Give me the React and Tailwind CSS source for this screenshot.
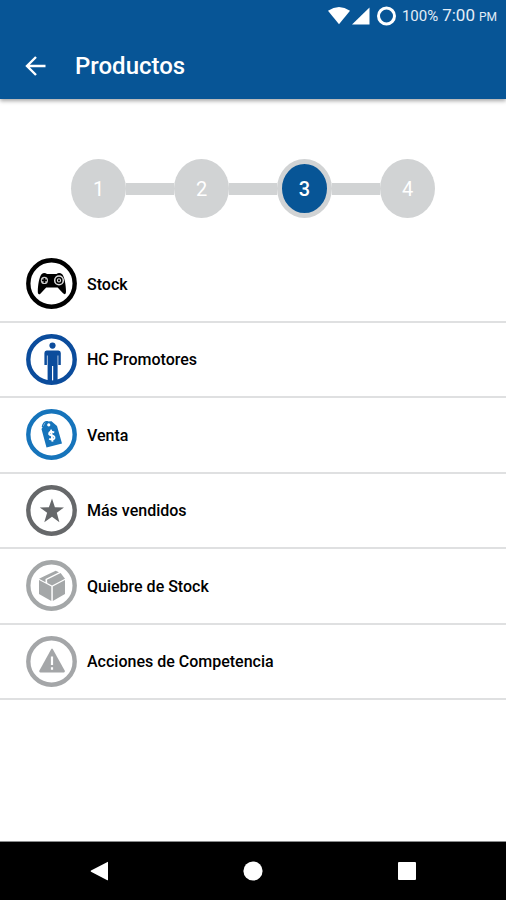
import React from "react";

function Ring({ children }) {
  return (
    <svg viewBox="0 0 51 51" className="size-[51px] shrink-0" fill="currentColor" aria-hidden="true">
      <circle cx="25.5" cy="25.5" r="23.2" fill="none" stroke="currentColor" strokeWidth="4.4" />
      {children}
    </svg>
  );
}

function GamepadIcon() {
  return (
    <Ring>
      <path d="M15.5 16.2Q18.3 14 21 16H30.5Q33.2 14 36.2 16.2C38.6 19 39.9 27 40 33.5C40 36.6 38.4 36.8 36.8 35L31.6 29.6H20.2L14.6 35.4C13 37 11.8 36.4 11.8 33.5C11.9 27 13.2 19 15.5 16.2Z" />
      <circle cx="18.4" cy="22.4" r="3.6" fill="#ccc" />
      <path d="M17.5 19.9h1.8v1.6h1.6v1.8h-1.6v1.6h-1.8v-1.6h-1.6v-1.8h1.6Z" />
      <circle cx="33" cy="22.4" r="4.3" fill="none" stroke="#ddd" strokeWidth="1.5" />
      <circle cx="33" cy="22.4" r="1.6" fill="none" stroke="#ddd" strokeWidth="1.1" />
    </Ring>
  );
}

function PersonIcon() {
  return (
    <Ring>
      <circle cx="26.5" cy="11.6" r="3.1" />
      <path d="M20.6 16.4H32.4Q34.8 16.6 34.8 19V31H32.3V21.5H31.6V49H27.2V32H26V49H21.6V21.5H20.9V31H18.4V19Q18.4 16.6 20.6 16.4Z" />
    </Ring>
  );
}

function TagIcon() {
  return (
    <Ring>
      <path fillRule="evenodd" d="M20 12.5L25.5 12.2L31 17L36 34.5L20.5 38.5L15.5 20Z M22.7 14.3a1.6 1.6 0 1 0 .1 0Z" />
      <path d="M16.3 18Q17.5 12 22 12.8" fill="none" stroke="currentColor" strokeWidth="1.3" />
      <path d="M28.2 23.5Q25 21.7 23.4 23.6C22.2 25.8 24.4 26.2 26 26.4C28.4 26.7 29.3 28.7 27.8 30Q26 31.3 23.2 29.7M25 20.6L26.5 32.7" fill="none" stroke="#fff" strokeWidth="1.9" />
    </Ring>
  );
}

function StarIcon() {
  return (
    <Ring>
      <path d="M26 13.6L28.9 22.2L38 22.4L30.8 27.8L33.4 37.2L26 31.7L18.3 37.2L21.1 27.8L13.8 22.4L22.9 22.2Z" />
    </Ring>
  );
}

function BoxIcon() {
  return (
    <Ring>
      <path d="M13 20L25.3 26.5V41L13 34Z" />
      <path d="M26.8 26.5L39 20V34L26.8 41Z" />
      <path d="M13 18.8L17.6 16.4L29.7 10.8L33 12.3L19.5 18.9V22.3Z" />
      <path d="M21 19.8L34.6 13.1L39 18.7L26 25.4L21.3 22.9Z" />
    </Ring>
  );
}

function WarningIcon() {
  return (
    <Ring>
      <path d="M25.3 13Q26 12 26.7 13L38.8 34.8Q39.2 36.4 37.8 36.5H14.3Q12.8 36.4 13.3 34.8Z" />
      <path d="M24.9 20.5h2.2v8.4h-2.2Z M24.9 31.2h2.2v2.5h-2.2Z" fill="#fff" />
    </Ring>
  );
}

const items = [
  { label: "Stock", color: "text-black", Icon: GamepadIcon },
  { label: "HC Promotores", color: "text-[#0b4c9c]", Icon: PersonIcon },
  { label: "Venta", color: "text-[#1674bb]", Icon: TagIcon },
  { label: "Más vendidos", color: "text-[#66686a]", Icon: StarIcon },
  { label: "Quiebre de Stock", color: "text-[#a4a7a8]", Icon: BoxIcon },
  { label: "Acciones de Competencia", color: "text-[#a4a6a8]", Icon: WarningIcon },
];

const steps = [1, 2, 3, 4];

function StatusBar() {
  return (
    <div className="flex h-8 items-center justify-end pr-[9px] text-[#e3edf7]">
      <svg viewBox="0 0 70 20" className="mr-[5px] h-5 w-[70px]" fill="#fff" aria-hidden="true">
        <path d="M1 4.7Q12 -2.5 23 4.7L12 18.2Z" />
        <path d="M42.5 1.5V18.5H25Z" />
        <circle cx="59.5" cy="10" r="8" fill="none" stroke="#fff" strokeWidth="3" />
      </svg>
      <span className="mr-1 text-[15px]">100%</span>
      <span className="mr-1 text-[17px]">7:00</span>
      <span className="pt-0.5 text-xs">PM</span>
    </div>
  );
}

function Stepper() {
  return (
    <ol className="flex items-center justify-center pt-[60px] pb-[29px]">
      {steps.map((n) => (
        <li key={n} className="flex items-center">
          {n > 1 && <span className="h-3 w-12 bg-[#d1d3d4]" />}
          <button
            type="button"
            aria-current={n === 3 ? "step" : undefined}
            className={
              n === 3
                ? "h-[59px] w-[55px] rounded-[50%] border-[5px] border-[#d1d3d4] bg-[#075596] text-xl font-medium text-white"
                : "h-[59px] w-[55px] rounded-[50%] bg-[#d1d3d4] text-xl text-white"
            }
          >
            {n}
          </button>
        </li>
      ))}
    </ol>
  );
}

export default function App() {
  return (
    <div className="flex min-h-screen flex-col bg-white font-['Roboto',sans-serif] text-black">
      <header className="bg-[#075596] shadow-[0_2px_4px_rgba(0,0,0,0.35)]">
        <StatusBar />
        <div className="flex h-[67px] items-center gap-[29px] pl-[25px] text-white">
          <button type="button" aria-label="Volver">
            <svg viewBox="0 0 21 20" className="block h-5 w-[21px]" fill="none" stroke="currentColor" strokeWidth="2.4" aria-hidden="true">
              <path d="M20.5 10H2M11 1L2 10L11 19" />
            </svg>
          </button>
          <h1 className="text-2xl font-medium">Productos</h1>
        </div>
      </header>

      <main className="grow">
        <Stepper />
        <ul className="grid h-[453px] grid-rows-6">
          {items.map(({ label, color, Icon }) => (
            <li key={label} className="border-b-2 border-[#dfe0e1]">
              <button type="button" className="flex size-full items-center gap-2.5 pl-[26px] text-left">
                <span className={color}>
                  <Icon />
                </span>
                <span className="pt-0.5 text-base font-medium">{label}</span>
              </button>
            </li>
          ))}
        </ul>
      </main>

      <nav className="grid h-[59px] grid-cols-3 place-items-center border-t border-[#8a8c8d] bg-black px-[22px]">
        <button type="button" aria-label="Atrás">
          <svg viewBox="0 0 20 20" className="block size-5" fill="#fff" aria-hidden="true">
            <path d="M18.5 1Q19 .5 19 1.2V19Q19 19.5 18.3 19.3L2 10.7Q1.2 10 2 9.5Z" />
          </svg>
        </button>
        <button type="button" aria-label="Inicio">
          <svg viewBox="0 0 20 20" className="block size-5" fill="#fff" aria-hidden="true">
            <circle cx="10" cy="10" r="9.6" />
          </svg>
        </button>
        <button type="button" aria-label="Recientes">
          <svg viewBox="0 0 20 20" className="block size-5" fill="#fff" aria-hidden="true">
            <rect x="1" y="1" width="18" height="18" rx="1" />
          </svg>
        </button>
      </nav>
    </div>
  );
}
